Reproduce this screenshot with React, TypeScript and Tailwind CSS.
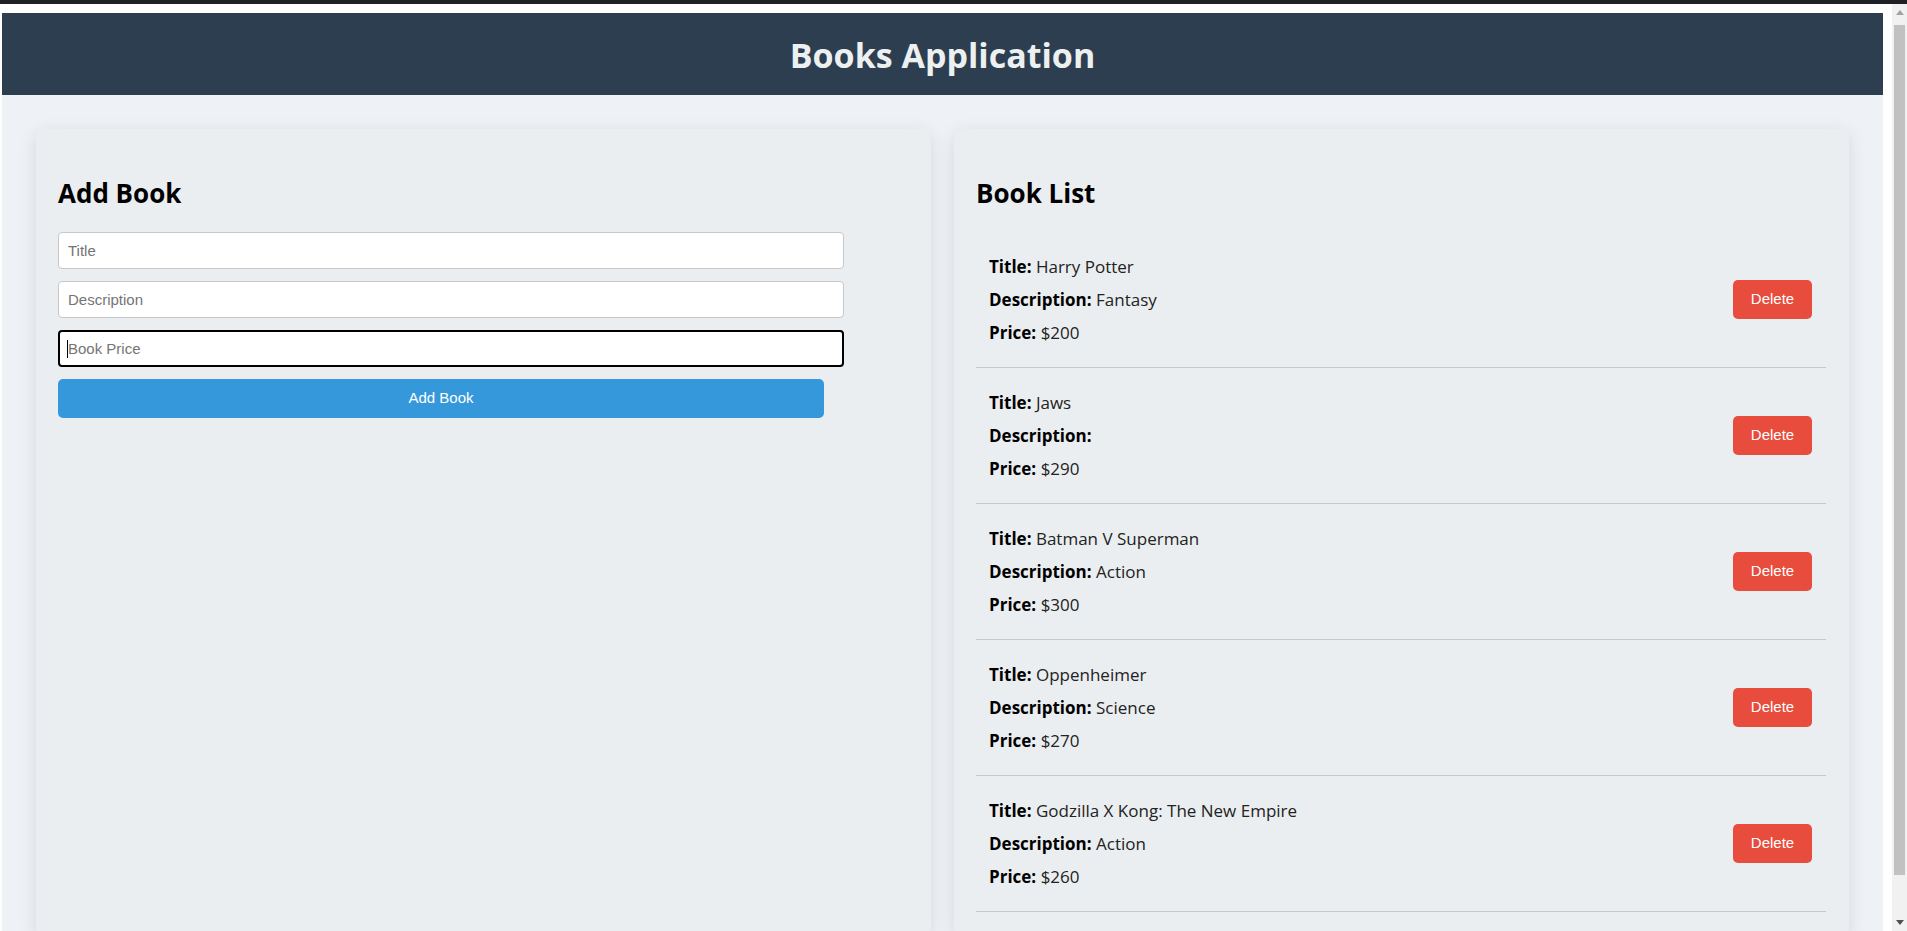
import React from "react";

const books = [
  { title: "Harry Potter", description: "Fantasy", price: 200 },
  { title: "Jaws", description: "", price: 290 },
  { title: "Batman V Superman", description: "Action", price: 300 },
  { title: "Oppenheimer", description: "Science", price: 270 },
  { title: "Godzilla X Kong: The New Empire", description: "Action", price: 260 },
];

export default function App() {
  return (
    <div className="h-[931px] w-[1907px] overflow-hidden flex flex-col bg-white font-['Segoe_UI','Open_Sans',sans-serif]">
      <div className="h-[4px] shrink-0 bg-[#202124]" />
      <div className="flex flex-1 min-h-0">
        <div className="w-[1883px] shrink-0 pl-[2px] pt-[9px] flex flex-col min-h-0">
          <header className="h-[82px] shrink-0 bg-[#2c3e50] flex items-center justify-center">
            <h1 className="text-[34px] font-bold text-[#ecf0f1] leading-none mt-[2px]">Books Application</h1>
          </header>
          <main className="flex-1 min-h-0 bg-[#eef2f6] px-[34px] pt-[34px] pb-[4px] grid grid-cols-2 gap-[23px]">
            <section className="bg-[#ebeef0] rounded-[8px] shadow-[0_4px_18px_rgba(0,0,0,0.1)] px-[22px] py-[24px]">
              <h2 className="mt-[25px] mb-[24px] text-[26px] leading-[30px] font-bold text-black">Add Book</h2>
              <form className="flex flex-col gap-[12px] font-['Liberation_Sans',Arial,sans-serif]" onSubmit={(e) => e.preventDefault()}>
                <input
                  className="w-[786px] h-[37px] bg-white border border-[#c8c8c8] rounded-[4px] pl-[9px] text-[15px] placeholder:text-[#757575] outline-none"
                  placeholder="Title"
                />
                <input
                  className="w-[786px] h-[37px] bg-white border border-[#c8c8c8] rounded-[4px] pl-[9px] text-[15px] placeholder:text-[#757575] outline-none"
                  placeholder="Description"
                />
                <div className="relative w-[786px] h-[37px]">
                  <input
                    className="w-full h-full bg-white border-2 border-black rounded-[4px] pl-[8px] text-[15px] placeholder:text-[#757575] outline-none"
                    placeholder="Book Price"
                  />
                  <span className="absolute left-[9px] top-[10px] w-[1px] h-[18px] bg-black" />
                </div>
                <button
                  type="submit"
                  className="w-[766px] h-[39px] bg-[#3498db] text-white rounded-[5px] text-[15px]"
                >
                  Add Book
                </button>
              </form>
            </section>
            <section className="bg-[#ebeef0] rounded-[8px] shadow-[0_4px_18px_rgba(0,0,0,0.1)] px-[22px] py-[24px]">
              <h2 className="mt-[25px] mb-[24px] text-[26px] leading-[30px] font-bold text-black">Book List</h2>
              <ul className="w-[850px]">
                {books.map((b) => (
                  <li
                    key={b.title}
                    className="flex items-center justify-between border-b border-[#c8c8c8] pl-[13px] pr-[14px] py-[18px]"
                  >
                    <div className="text-[17px] leading-[33px] text-[#222]">
                      <div>
                        <span className="font-bold text-black">Title:</span> {b.title}
                      </div>
                      <div>
                        <span className="font-bold text-black">Description:</span> {b.description}
                      </div>
                      <div>
                        <span className="font-bold text-black">Price:</span> ${b.price}
                      </div>
                    </div>
                    <button className="w-[79px] h-[39px] bg-[#e74c3c] text-white rounded-[5px] text-[15px] font-['Liberation_Sans',Arial,sans-serif]">
                      Delete
                    </button>
                  </li>
                ))}
              </ul>
            </section>
          </main>
        </div>
        <div className="w-[9px] shrink-0 bg-white" />
        <div className="w-[15px] shrink-0 bg-[#f1f1f1] flex flex-col items-center">
          <div className="h-[17px] w-full flex items-center justify-center">
            <svg width="8" height="5" viewBox="0 0 8 5"><path d="M0 5 L4 0 L8 5 Z" fill="#a3a3a3" /></svg>
          </div>
          <div className="mx-[2px] w-[11px] h-[850px] bg-[#c1c1c1] mt-[4px]" />
          <div className="flex-1" />
          <div className="h-[17px] w-full flex items-center justify-center">
            <svg width="8" height="5" viewBox="0 0 8 5"><path d="M0 0 L8 0 L4 5 Z" fill="#505050" /></svg>
          </div>
        </div>
      </div>
    </div>
  );
}
